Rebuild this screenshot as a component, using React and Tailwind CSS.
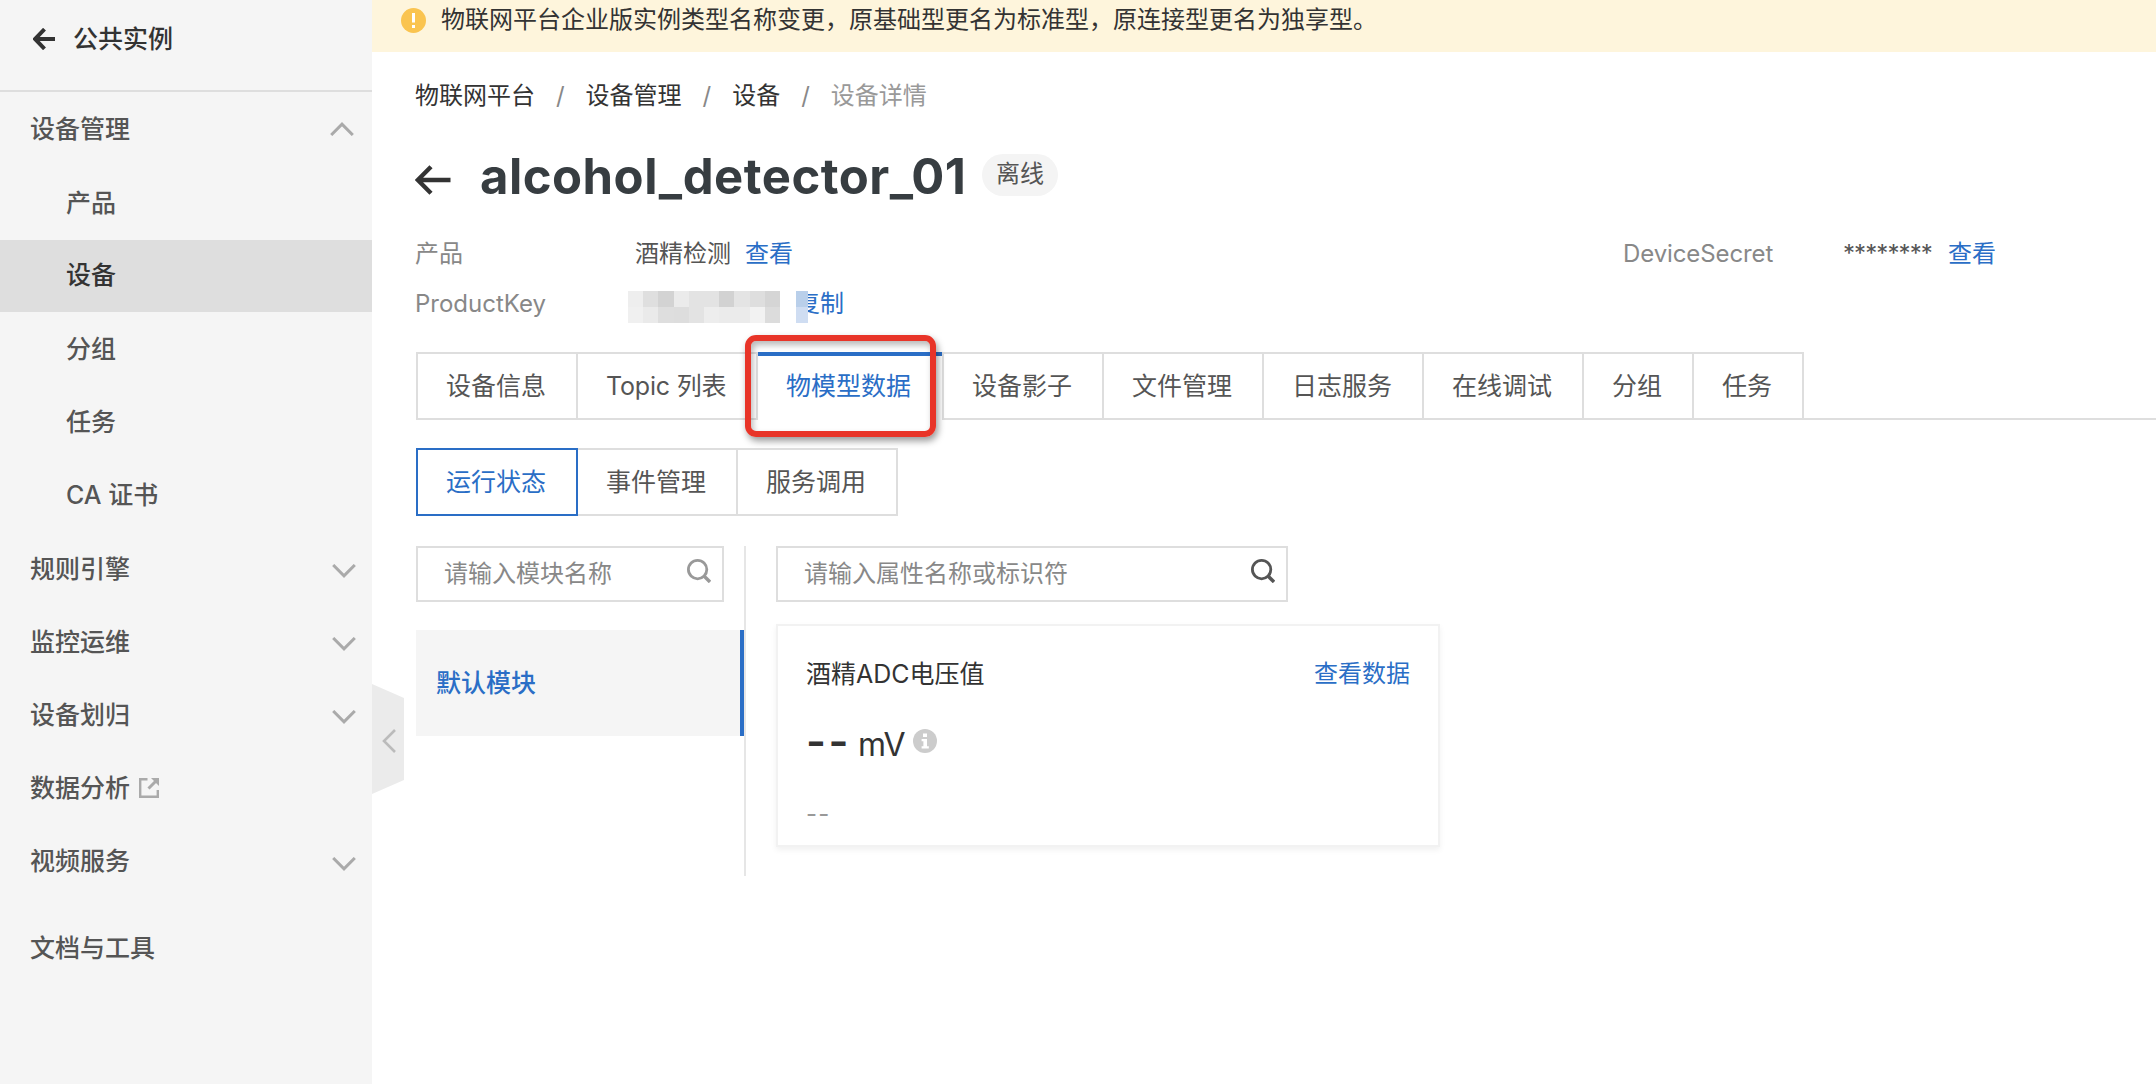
import React from "react";

const CHILDREN = [
  { label: "产品" },
  { label: "设备", active: true },
  { label: "分组" },
  { label: "任务" },
  { label: "CA 证书" },
];

const SECTIONS = [
  { label: "规则引擎", chevron: true },
  { label: "监控运维", chevron: true },
  { label: "设备划归", chevron: true },
  { label: "数据分析", external: true },
  { label: "视频服务", chevron: true },
];

const MOSAIC = [
  ["#eeeeee", "#dfdfdf", "#d3d3d3", "#ebebeb", "#e3e3e3", "#e3e3e3", "#d2d2d2", "#e4e4e4", "#dedede", "#d5d5d5"],
  ["#f0f0f0", "#eaeaea", "#dedede", "#dddddd", "#e3e3e3", "#ededed", "#ebebeb", "#ebebeb", "#f2f2f2", "#dcdcdc"],
];

function BackArrow({ className }) {
  return (
    <svg className={className} viewBox="0 0 22 22" fill="none" stroke="currentColor" strokeWidth="4">
      <path d="M11.5 1.2 L2 11 L11.5 20.8 M2 11 H22" />
    </svg>
  );
}

function TitleArrow() {
  return (
    <svg className="h-[30px] w-9 text-[#333]" viewBox="0 0 36 30" fill="none" stroke="currentColor" strokeWidth="4.4">
      <path d="M16 1.8 L2.8 15 L16 28.2 M2.5 15 H35.5" />
    </svg>
  );
}

function Chevron({ up }) {
  return (
    <svg
      className={up ? "mr-[18px] h-[14px] w-6 shrink-0" : "mr-4 mt-[5px] h-[14px] w-6 shrink-0"}
      viewBox="0 0 24 14"
      fill="none"
      stroke="#aaaaaa"
      strokeWidth="3"
    >
      <path d={up ? "M1.2 13 L12 2.2 L22.8 13" : "M1.2 1 L12 11.8 L22.8 1"} />
    </svg>
  );
}

function ExternalIcon() {
  return (
    <svg className="ml-[9px] h-5 w-5" viewBox="0 0 20 20" fill="none" stroke="#aaaaaa" strokeWidth="2.4">
      <path d="M8.5 1.2 H1.2 V18.8 H18.8 V12" />
      <path d="M9.5 10.5 L17 3" strokeWidth="3" />
      <path d="M12 0 H20 V8 Z" fill="#aaaaaa" stroke="none" />
    </svg>
  );
}

function SearchIcon({ className }) {
  return (
    <svg className={className} viewBox="0 0 24 24" fill="none" stroke="currentColor" strokeWidth="2.8">
      <circle cx="10.6" cy="10.6" r="9.2" />
      <path d="M17 17 L23 23" strokeWidth="3.4" />
    </svg>
  );
}

function Sidebar() {
  return (
    <aside className="h-full w-[372px] shrink-0 bg-[#f5f5f5] text-[25px] leading-9 text-[#555] font-medium">
      <div className="flex h-[92px] items-center border-b-2 border-[#dedede] pb-3 pl-[33px] text-[#333]">
        <BackArrow className="mr-[18px] h-[22px] w-[22px]" />
        <span>公共实例</span>
      </div>
      <div className="flex h-[74px] items-center justify-between pl-[30px]">
        <span>设备管理</span>
        <Chevron up />
      </div>
      {CHILDREN.map((c) => (
        <div key={c.label} className="flex h-[73.2px] items-center">
          <div className={c.active ? "flex h-[72px] w-full items-center bg-[#dedede] pl-[66px] pb-px text-[#333]" : "pl-[66px]"}>
            {c.label}
          </div>
        </div>
      ))}
      {SECTIONS.map((s) => (
        <div key={s.label} className="flex h-[73.2px] items-center pl-[30px]">
          <span>{s.label}</span>
          {s.external && <ExternalIcon />}
          <span className="flex-1" />
          {s.chevron && <Chevron />}
        </div>
      ))}
      <div className="mt-[14px] flex h-[73px] items-center pl-[30px]">文档与工具</div>
    </aside>
  );
}

function Slash() {
  return <span className="w-[50.6px] text-center text-[#888]">/</span>;
}

function Tab({ children }) {
  return (
    <div className="flex h-[68px] items-center border-y-2 border-r-2 border-[#dedede] pl-7 pr-[30px]">{children}</div>
  );
}

function Tabs() {
  return (
    <div className="mt-[23px] flex text-[25px] text-[#555]">
      <div className="flex h-[68px] w-[162px] items-center border-2 border-[#dedede] pl-7">设备信息</div>
      <div className="flex h-[68px] w-[180px] items-center border-y-2 border-r-2 border-[#dedede] pl-7 tracking-[-0.2px]">Topic 列表</div>
      <div className="relative flex h-[68px] w-[184px] items-center border-t-4 border-[#2a6ec6] pb-1 pl-7 text-[#2a6ec6]">
        物模型数据
        <div className="absolute -left-[13px] -top-[21px] h-[102px] w-[191px] rounded-[11px] border-[6px] border-[#e83428] shadow-[2px_4px_7px_rgba(0,0,0,0.4),inset_2px_4px_6px_rgba(0,0,0,0.28)]" />
      </div>
      <div className="flex h-[68px] w-[162px] items-center border-2 border-[#dedede] pl-7">设备影子</div>
      <Tab>文件管理</Tab>
      <Tab>日志服务</Tab>
      <Tab>在线调试</Tab>
      <Tab>分组</Tab>
      <Tab>任务</Tab>
      <div className="flex-1 border-b-2 border-[#dedede]" />
    </div>
  );
}

function SubTabs() {
  return (
    <div className="mt-7 flex text-[25px] text-[#555]">
      <div className="flex h-[68px] w-[162px] items-center border-2 border-[#2a6ec6] pl-7 text-[#2a6ec6]">运行状态</div>
      <div className="flex h-[68px] w-40 items-center border-y-2 border-r-2 border-[#dedede] pl-7">事件管理</div>
      <div className="flex h-[68px] w-40 items-center border-y-2 border-r-2 border-[#dedede] pl-7">服务调用</div>
    </div>
  );
}

function InfoRows() {
  return (
    <div className="-ml-px mt-[30px] flex flex-col text-[#555]">
      <div className="flex h-[50px] items-center">
        <span className="w-[220px] text-[#888]">产品</span>
        <span>酒精检测</span>
        <a className="ml-[14px] w-[878px] text-[#2a6ec6]">查看</a>
        <span className="w-[220px] tracking-[-0.1px] text-[#888]">DeviceSecret</span>
        <span className="w-[105px] tracking-[-0.9px]">********</span>
        <a className="text-[#2a6ec6]">查看</a>
      </div>
      <div className="flex h-[50px] items-center">
        <span className="w-[213px] text-[#888]">ProductKey</span>
        <div className="mt-[6px] flex w-[152px] flex-col">
          {MOSAIC.map((row, i) => (
            <div key={i} className="flex h-4">
              {row.map((c, j) => (
                <span key={j} className="flex-1" style={{ background: c }} />
              ))}
            </div>
          ))}
        </div>
        <div className="relative ml-4">
          <a className="text-[#2a6ec6]">复制</a>
          <div className="absolute left-0 top-[5px] flex h-8 w-3 flex-col">
            <span className="h-4 bg-[#b9cfea]" />
            <span className="h-4 bg-[#cfddf2]" />
          </div>
        </div>
      </div>
    </div>
  );
}

function PropertyCard() {
  return (
    <div className="mt-[22px] h-[223px] w-[664px] border-2 border-[#f2f2f2] pl-7 pr-7 shadow-[0_3px_6px_rgba(0,0,0,0.06)]">
      <div className="mt-[30px] flex h-9 items-center justify-between">
        <span className="-mt-px text-[25px] text-[#333]">酒精ADC电压值</span>
        <a className="text-[#2a6ec6]">查看数据</a>
      </div>
      <div className="mt-[25px] flex h-12 items-start text-[#333]">
        <span className="w-[52px] whitespace-nowrap text-[43px] font-semibold leading-[48px] tracking-[2.6px]">--</span>
        <span className="mt-1 text-[32px] leading-[48px] tracking-[-0.9px]">mV</span>
        <svg className="ml-2 mt-3 h-6 w-6" viewBox="0 0 24 24">
          <circle cx="12" cy="12" r="12" fill="#cccccc" />
          <path d="M10 4.5 h4 v3.6 h-4 z M8.6 10 h5.4 v7.2 h1.8 v2.3 h-7.2 v-2.3 h1.8 v-4.9 h-1.8 z" fill="#ffffff" />
        </svg>
      </div>
      <div className="mt-[31px] text-2xl leading-9 tracking-[1.2px] text-[#999]">--</div>
    </div>
  );
}

function SearchBox({ wide, placeholder }) {
  return (
    <div
      className={
        wide
          ? "flex h-14 w-[512px] items-center border-2 border-[#dedede] pl-[26px] pr-[11px] text-[#555]"
          : "flex h-14 w-[308px] items-center border-2 border-[#dedede] pl-[26px] pr-[11px] text-[#999]"
      }
    >
      <input className="min-w-0 flex-1 bg-transparent outline-none placeholder:text-[#888]" placeholder={placeholder} />
      <SearchIcon className="mb-[6px] h-6 w-6 shrink-0" />
    </div>
  );
}

export default function App() {
  return (
    <div className="flex h-[1084px] w-full overflow-hidden bg-white font-['Inter','Noto_Sans_CJK_SC',sans-serif]">
      <Sidebar />
      <main className="relative min-w-0 flex-1 text-2xl leading-9">
        <div className="flex h-[52px] bg-[#fef5dc] pl-[29px] text-[#333]">
          <svg className="mr-[15px] mt-2 h-[25px] w-[25px]" viewBox="0 0 25 25">
            <circle cx="12.5" cy="12.5" r="12.5" fill="#fac450" />
            <path d="M11 5 h3 v9.5 h-3 z M11 17 h3 v3 h-3 z" fill="#ffffff" />
          </svg>
          <span className="mt-[2px]">物联网平台企业版实例类型名称变更，原基础型更名为标准型，原连接型更名为独享型。</span>
        </div>

        <div className="absolute left-0 top-[684px] h-[110px] w-8">
          <svg className="h-full w-full" viewBox="0 0 32 110">
            <path d="M0 0 L32 14 V96 L0 110 Z" fill="#ebebeb" />
            <path d="M23 46 L12 57 L23 68" fill="none" stroke="#bbbbbb" strokeWidth="2.6" />
          </svg>
        </div>

        <div className="pl-11">
          <nav className="-ml-px flex pt-[26px] text-[#333]">
            <span>物联网平台</span>
            <Slash />
            <span>设备管理</span>
            <Slash />
            <span>设备</span>
            <Slash />
            <span className="text-[#999]">设备详情</span>
          </nav>

          <div className="mt-[34px] flex h-[51px] items-center">
            <div className="-ml-px mt-3"><TitleArrow /></div>
            <h1 className="ml-[29px] mt-[7px] w-[486px] whitespace-nowrap text-[49px] font-bold leading-[56px] tracking-[0.5px] text-[#373d41]">alcohol_detector_01</h1>
            <span className="ml-4 mt-[3px] flex h-[42px] w-[76px] items-center justify-center rounded-full bg-[#f4f4f4] pb-[3px] text-[#555]">离线</span>
          </div>

          <InfoRows />
          <Tabs />
          <SubTabs />

          <div className="mt-[30px] flex">
            <div className="h-[330px] w-[330px] border-r-2 border-[#e6e6e6]">
              <SearchBox placeholder="请输入模块名称" />
              <div className="mt-7 flex h-[106px] items-center border-r-4 border-[#2a6ec6] bg-[#f5f5f5] pl-5 text-[25px] font-medium text-[#2a6ec6]">
                默认模块
              </div>
            </div>
            <div className="ml-[30px]">
              <SearchBox wide placeholder="请输入属性名称或标识符" />
              <PropertyCard />
            </div>
          </div>
        </div>
      </main>
    </div>
  );
}
